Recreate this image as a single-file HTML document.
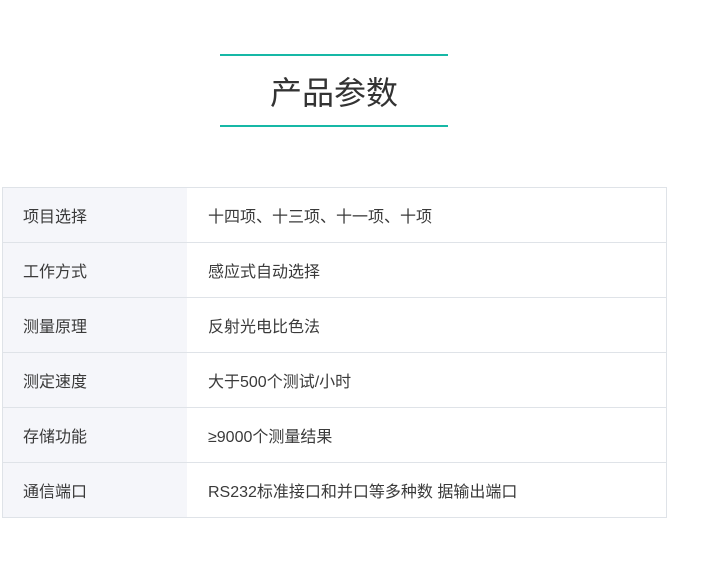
<!DOCTYPE html>
<html><head><meta charset="utf-8"><style>
body{margin:0;width:710px;height:571px;background:#fff;font-family:"Liberation Sans","Noto Sans CJK SC",sans-serif;color:#333;position:relative;overflow:hidden}
.l{position:absolute;left:220px;width:228px;height:2px;background:#17b8a6}
.t{position:absolute;left:220px;width:228px;top:71px;text-align:center;font-size:32px;line-height:44px;color:#333}
table{position:absolute;left:2px;top:187px;width:665px;border-collapse:collapse}
td{border:1px solid #dfe3e8;height:54px;padding:0;font-size:16px;color:#3a3a3a}
td.a{width:164px;background:#f5f6fa;padding-left:20px;border-right:none}
td.b{padding-left:21px;border-left:none}
</style></head><body>
<div class="l" style="top:54px"></div>
<div class="t">产品参数</div>
<div class="l" style="top:125px"></div>
<table>
<tr><td class="a">项目选择</td><td class="b">十四项、十三项、十一项、十项</td></tr>
<tr><td class="a">工作方式</td><td class="b">感应式自动选择</td></tr>
<tr><td class="a">测量原理</td><td class="b">反射光电比色法</td></tr>
<tr><td class="a">测定速度</td><td class="b">大于500个测试/小时</td></tr>
<tr><td class="a">存储功能</td><td class="b">≥9000个测量结果</td></tr>
<tr><td class="a">通信端口</td><td class="b">RS232标准接口和并口等多种数 据输出端口</td></tr>
</table>
</body></html>
